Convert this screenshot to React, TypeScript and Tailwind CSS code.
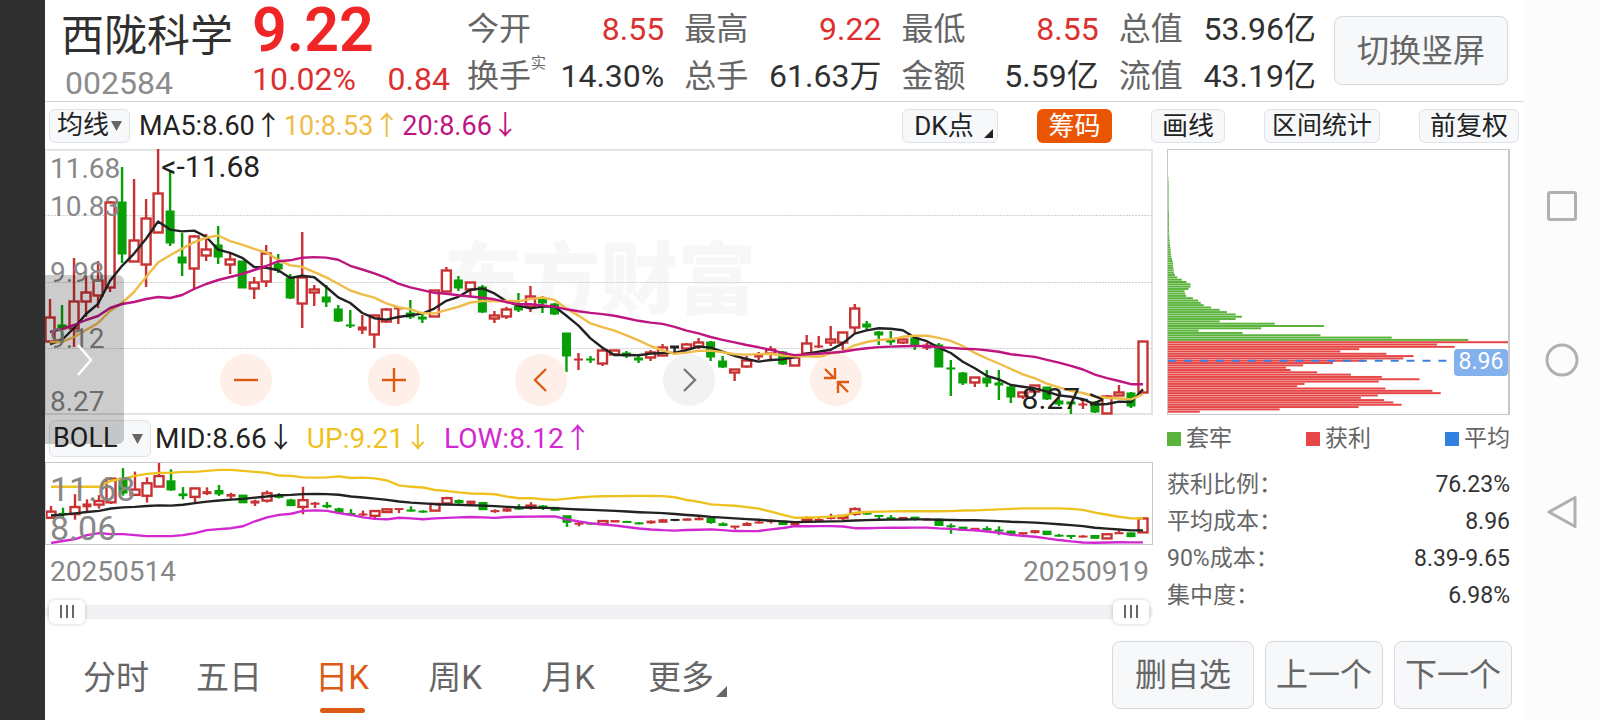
import React, { useState } from 'react';
import clsx from 'clsx';

type Tone = 'up' | 'down' | 'flat';

// high, body top, body bottom, low, direction
// Levels are measured down from the top of the price pane (0 = 11.68, 265 = 8.27)
type Candle = [number, number, number, number, Tone];

const r = (h: number, t: number, b: number, l: number): Candle => [h, t, b, l, 'up'];
const g = (h: number, t: number, b: number, l: number): Candle => [h, t, b, l, 'down'];

const CANDLES: Candle[] = [
  r(150, 168, 193, 193), g(156, 176, 180, 188), r(109, 152, 180, 198), r(127, 143, 153, 168),
  r(112, 131, 147, 159), r(52, 53, 139, 143), g(18, 53, 105, 114), r(30, 91, 113, 113),
  r(50, 69, 116, 138), r(0, 44, 84, 84), g(22, 62, 94, 97), g(84, 108, 114, 127),
  r(86, 87, 120, 140), r(85, 100, 107, 112), g(77, 96, 108, 115), r(104, 110, 116, 125),
  g(112, 112, 139, 139), r(128, 133, 140, 150), r(96, 104, 133, 138), g(105, 115, 120, 124),
  g(125, 129, 149, 150), r(83, 128, 155, 179), r(136, 140, 144, 157), g(136, 148, 153, 158),
  g(156, 160, 172, 173), g(161, 176, 177, 179), r(166, 178, 181, 185), r(166, 166, 186, 199),
  r(159, 160, 173, 174), r(159, 159, 160, 175), g(151, 164, 168, 170), g(165, 168, 170, 174),
  r(141, 141, 168, 168), r(118, 121, 143, 143), g(127, 131, 139, 142), r(133, 133, 141, 148),
  g(136, 138, 163, 164), r(162, 166, 170, 174), r(158, 160, 168, 170), g(144, 157, 161, 163),
  r(137, 147, 158, 163), g(147, 150, 154, 164), g(154, 155, 165, 166), g(184, 184, 207, 223),
  r(204, 210, 211, 221), g(207, 210, 211, 214), r(200, 201, 215, 217), r(201, 201, 206, 206),
  g(202, 204, 207, 209), g(206, 209, 211, 214), r(201, 203, 209, 212), r(195, 198, 207, 207),
  [197, 197, 199, 203, 'flat'], r(194, 195, 200, 201), r(189, 193, 198, 200), g(192, 193, 208, 212),
  g(207, 212, 218, 219), r(220, 220, 224, 232), r(207, 211, 218, 219), r(203, 206, 208, 211),
  r(197, 200, 205, 211), g(202, 203, 215, 216), r(208, 208, 217, 217), r(186, 194, 205, 205),
  r(187, 197, 198, 199), r(177, 190, 194, 197), r(183, 183, 194, 201), r(155, 159, 179, 184),
  g(172, 175, 178, 181), g(182, 183, 186, 196), g(182, 191, 193, 196), r(190, 190, 194, 195),
  g(188, 189, 196, 201), r(194, 196, 199, 201), g(194, 196, 218, 218), g(211, 219, 220, 247),
  g(223, 224, 234, 236), r(228, 228, 234, 238), g(221, 229, 234, 238), g(221, 234, 236, 251),
  g(236, 238, 248, 254), r(243, 243, 248, 250), r(236, 236, 243, 246), g(238, 238, 250, 251),
  g(248, 252, 255, 257), g(253, 253, 255, 265), r(252, 255, 256, 260), g(253, 253, 263, 264),
  r(246, 247, 265, 265), r(236, 243, 247, 247), g(243, 244, 257, 259), r(192, 192, 244, 244),
];

// Averages for the first sessions, which reach back before the visible range
const MA5_SEED = [195, 191, 179, 165];
const MA10_SEED = [193, 193, 188, 181, 174, 162, 154, 143, 128];
const MA20_SEED = [183, 180, 176, 171, 167, 159, 155, 153, 150, 148, 149, 146, 140, 135, 131, 128, 125, 121, 117];
const UP_SEED = [24, 24, 24, 24, 24, 18, 16, 13, 11, 10, 10, 9, 9, 8, 7, 7, 8, 9, 10];
const LOW_SEED = [81, 79, 77, 73, 71, 72, 72, 73, 74, 74, 74, 73, 71, 68, 67, 66, 64, 59, 55];

const TRAPPED = [
  1, 1, 2, 2, 2, 2, 2, 2, 2, 2, 2, 2, 2, 2, 2, 3, 3, 3, 3, 3, 3, 3, 3, 3, 3, 4, 4, 5, 5, 6, 7, 8, 8, 9, 10, 12, 14,
  15, 15, 16, 17, 18, 21, 28, 42, 56, 68, 68, 62, 50, 52, 55, 75, 91, 99, 108, 130, 156, 178, 204, 223, 204, 156, 322,
  471, 281, 92, 225, 460, 675, 906,
];
const PROFIT = [
  1026, 812, 865, 577, 520, 659, 741, 710, 592, 498, 408, 356, 370, 450, 552, 645, 759, 636, 412, 390, 656, 798, 823,
  633, 582, 652, 680, 705, 575, 337, 96,
];

const BOLL_SCALE = 0.29;
const closes = CANDLES.map(([, top, bottom, , tone]) => (tone === 'up' ? top : bottom));

const xOf = (i: number) => 5 + i * 12;
const mean = (xs: number[]) => xs.reduce((a, b) => a + b, 0) / xs.length;

const movingAverage = (n: number, seed: number[]) =>
  closes.map((_, i) => (i < n - 1 ? seed[i] : mean(closes.slice(i - n + 1, i + 1))));

const bollBand = (side: number, seed: number[]) =>
  closes.map((_, i) => {
    if (i < 19) return seed[i];
    const win = closes.slice(i - 19, i + 1);
    const m = mean(win);
    const sd = Math.sqrt(mean(win.map((c) => (c - m) ** 2)));
    return (m + side * 2 * sd) * BOLL_SCALE;
  });

const toPoints = (ys: number[]) => ys.map((y, i) => `${xOf(i)},${y.toFixed(1)}`).join(' ');

const MA5 = movingAverage(5, MA5_SEED);
const MA10 = movingAverage(10, MA10_SEED);
const MA20 = movingAverage(20, MA20_SEED);

const TONE_COLOR: Record<Tone, string> = { up: '#c83232', down: '#07a007', flat: '#222222' };

const Candles: React.FC<{ scale?: number }> = ({ scale = 1 }) => (
  <g>
    {CANDLES.map(([high, top, bottom, low, tone], i) => {
      const x = xOf(i);
      const color = TONE_COLOR[tone];
      const [h, t, b, l] = [high, top, bottom, low].map((v) => v * scale);
      const hollow = tone === 'up' && b - t > 3;
      return (
        <g key={i} stroke={color} strokeWidth={2.4}>
          {t > h && <line x1={x} x2={x} y1={h} y2={t} />}
          {l > b && <line x1={x} x2={x} y1={b} y2={l} />}
          {hollow ? (
            <rect x={x - 4.5} y={t + 0.5} width={9} height={b - t - 1} fill="#ffffff" />
          ) : (
            <rect x={x - 4.5} y={t - 0.5} width={9} height={Math.max(b - t + 1, 2)} fill={color} stroke="none" />
          )}
        </g>
      );
    })}
  </g>
);

const Line: React.FC<{ ys: number[]; color: string }> = ({ ys, color }) => (
  <polyline points={toPoints(ys)} fill="none" stroke={color} strokeWidth={2.4} strokeLinejoin="round" />
);

const Arrow: React.FC<{ children: string }> = ({ children }) => (
  <span className="[font-family:'Noto_Sans_CJK_SC',sans-serif]">{children}</span>
);

const STATS = [
  { label: '今开', value: '8.55', red: true },
  { label: '最高', value: '9.22', red: true },
  { label: '最低', value: '8.55', red: true },
  { label: '总值', value: '53.96亿' },
  { label: '换手', sup: '实', value: '14.30%' },
  { label: '总手', value: '61.63万' },
  { label: '金额', value: '5.59亿' },
  { label: '流值', value: '43.19亿' },
];

const Header: React.FC = () => (
  <header className="flex h-[102px] border-b border-[#d4d4d4] pr-[15px]">
    <div className="w-[207px] shrink-0 pl-4">
      <h1 className="mt-2 text-[43px] leading-[56px] text-[#303030]">西陇科学</h1>
      <p className="pl-1 text-[32px] leading-[38px] text-[#8c8c8c]">002584</p>
    </div>
    <div className="w-[215px] shrink-0">
      <p className="text-[61px] leading-[60px] font-semibold text-[#f02626]">9.22</p>
      <p className="flex justify-between pr-[17px] text-[32px] leading-[38px] text-[#dc3030]">
        <span>10.02%</span>
        <span>0.84</span>
      </p>
    </div>
    <dl className="grid flex-1 grid-cols-4 content-start gap-x-5 pt-[6px] text-[32px] leading-[47px]">
      {STATS.map(({ label, sup, value, red }) => (
        <div key={label} className="flex justify-between whitespace-nowrap">
          <dt className="flex text-[#666666]">
            {label}
            {sup && <span className="text-[15px] leading-5">{sup}</span>}
          </dt>
          <dd className={red ? 'text-[#dc3030]' : 'text-[#303030]'}>{value}</dd>
        </div>
      ))}
    </dl>
    <button
      type="button"
      className="mt-4 ml-[18px] h-[69px] w-[174px] shrink-0 rounded-lg border border-[#d5d8dc] bg-[#f7f8fa] text-[32px] text-[#666666]"
    >
      切换竖屏
    </button>
  </header>
);

const Picker: React.FC<{ label: string; value: string; className: string }> = ({ label, value, className }) => (
  <label
    className={clsx('flex items-center rounded-md border border-[#dfe2e6] bg-[#f7f8fa] text-[#222222]', className)}
  >
    <select aria-label={label} defaultValue={value} className="min-w-0 flex-1 appearance-none bg-transparent">
      <option>{value}</option>
    </select>
    <svg width="11" height="10" viewBox="0 0 11 10" className="shrink-0">
      <path d="M0 0h11L5.500 10z" fill="#666666" />
    </svg>
  </label>
);

const chip = 'flex h-[34px] items-center justify-center rounded-md text-[26px] leading-none';
const plainChip = 'border border-[#dfe2e6] bg-[#f7f8fa] text-[#222222]';

const Toolbar: React.FC = () => {
  const [chipsOn, setChipsOn] = useState(true);
  return (
    <div className="flex h-[47px] items-center pr-1 pl-1">
      <Picker label="主图指标" value="均线" className="h-[34px] w-[81px] pr-[7px] pl-[7px] text-[26px]" />
      <p className="flex gap-0.5 pl-[9px] text-[27px] whitespace-nowrap">
        <span className="text-[#222222]">MA5:8.60<Arrow>↑</Arrow></span>
        <span className="text-[#f0bc48]">10:8.53<Arrow>↑</Arrow></span>
        <span className="text-[#bf1581]">20:8.66<Arrow>↓</Arrow></span>
      </p>
      <div className="ml-auto flex gap-[39px]">
        <button type="button" className={clsx(chip, plainChip, 'relative w-[96px] pr-3')}>
          DK点
          <svg width="9" height="9" viewBox="0 0 9 9" className="absolute right-1 bottom-1">
            <path d="M9 0v9H0z" fill="#222222" />
          </svg>
        </button>
        <button
          type="button"
          aria-pressed={chipsOn}
          onClick={() => setChipsOn(!chipsOn)}
          className={clsx(chip, 'w-[75px]', chipsOn ? 'bg-[#ea5504] text-white' : plainChip)}
        >
          筹码
        </button>
        <button type="button" className={clsx(chip, plainChip, 'w-[74px]')}>画线</button>
        <button type="button" className={clsx(chip, plainChip, 'w-[116px]')}>
          <span className="text-[25px]">区间统计</span>
        </button>
        <button type="button" className={clsx(chip, plainChip, 'w-[100px]')}>前复权</button>
      </div>
    </div>
  );
};

const CONTROLS = [
  { name: '缩小', d: 'M14 26h24' },
  { name: '放大', d: 'M14 26h24M26 14v24' },
  { name: '向左', d: 'M31 15L20 26l11 11' },
  { name: '向右', d: 'M21 15l11 11-11 11', muted: true },
  { name: '收起', d: 'M15 15l9 9M25 14v10H14M38 38l-9-9M28 39V28h11' },
];

const axisText = 'absolute left-[5px] text-[28px] leading-8 text-[#888888]';

const PricePane: React.FC = () => (
  <div className="relative h-[266px]">
    <div className="absolute inset-0 border-2 border-l border-[#e3e3e3]" />
    <p className="absolute top-[89px] left-[36%] text-[78px] leading-[88px] font-black whitespace-nowrap text-[#f7f7f7]">
      东方财富
    </p>
    <svg
      viewBox="0 0 1107 266"
      preserveAspectRatio="none"
      className="absolute inset-0 h-full w-full"
      role="img"
      aria-label="日K线图"
    >
      {[66, 133, 199].map((y) => (
        <line key={y} x1={0} x2={1106} y1={y + 0.5} y2={y + 0.5} stroke="#d0d0d0" strokeDasharray="2 1" />
      ))}
      <Candles />
      <Line ys={MA5} color="#222222" />
      <Line ys={MA10} color="#f0bc48" />
      <Line ys={MA20} color="#bf1581" />
    </svg>
    <span className={clsx(axisText, 'top-[4px]')}>11.68</span>
    <span className={clsx(axisText, 'top-[42px]')}>10.83</span>
    <span className={clsx(axisText, 'top-[108px]')}>9.98</span>
    <span className={clsx(axisText, 'top-[174px]')}>9.12</span>
    <span className={clsx(axisText, 'top-[237px]')}>8.27</span>
    <span className="absolute top-[2px] left-[10.500%] text-[30px] leading-8 text-[#222222]">&lt;-11.68</span>
    <span className="absolute top-[234px] right-[49px] text-[30px] leading-8 text-[#222222]">8.27-&gt;</span>
    <div className="absolute top-[205px] left-[175px] flex w-[642px] justify-between">
      {CONTROLS.map(({ name, d, muted }) => (
        <button
          key={name}
          type="button"
          aria-label={name}
          className={clsx('size-[52px] rounded-full', muted ? 'bg-[#f2f2f2]' : 'bg-[#fef0e9]')}
        >
          <svg viewBox="0 0 52 52" fill="none" stroke={muted ? '#777777' : '#dd5a14'} strokeWidth={2.4}>
            <path d={d} />
          </svg>
        </button>
      ))}
    </div>
    <button
      type="button"
      aria-label="展开"
      className="absolute top-[126px] left-0 z-10 h-[169px] w-[79px] rounded-r-md bg-black/20"
    >
      <svg viewBox="0 0 79 169" fill="none" stroke="#ffffff" strokeWidth={2.4}>
        <path d="M33 70l13 15-13 15" />
      </svg>
    </button>
  </div>
);

const BollPane: React.FC = () => (
  <>
    <div className="flex h-[47px] items-center pl-1">
      <Picker label="副图指标" value="BOLL" className="h-[37px] w-[102px] pr-[7px] pl-[3px] text-[27px]" />
      <p className="flex gap-3 pb-0.5 pl-1 text-[28px] whitespace-nowrap">
        <span className="text-[#222222]">MID:8.66<Arrow>↓</Arrow></span>
        <span className="text-[#eec21e]">UP:9.21<Arrow>↓</Arrow></span>
        <span className="text-[#d228d2]">LOW:8.12<Arrow>↑</Arrow></span>
      </p>
    </div>
    <div className="relative h-[83px] border border-[#c8c8c8]">
      <svg
        viewBox="0 0 1106 82"
        preserveAspectRatio="none"
        className="absolute inset-0 h-full w-full"
        role="img"
        aria-label="BOLL指标图"
      >
        <Candles scale={BOLL_SCALE} />
        <Line ys={bollBand(-1, UP_SEED)} color="#eec21e" />
        <Line ys={MA20.map((y) => y * BOLL_SCALE)} color="#222222" />
        <Line ys={bollBand(1, LOW_SEED)} color="#d228d2" />
      </svg>
      <span className="absolute top-[8px] left-1 text-[34px] leading-9 text-[#888888]">11.68</span>
      <span className="absolute top-[47px] left-1 text-[34px] leading-9 text-[#888888]">8.06</span>
    </div>
  </>
);

const thumb = clsx(
  'pointer-events-none absolute inset-x-1 top-0 h-6 appearance-none bg-transparent',
  '[&::-webkit-slider-thumb]:pointer-events-auto [&::-webkit-slider-thumb]:appearance-none',
  '[&::-webkit-slider-thumb]:h-6 [&::-webkit-slider-thumb]:w-9 [&::-webkit-slider-thumb]:rounded-md',
  '[&::-webkit-slider-thumb]:shadow-[0_0_4px_rgba(0,0,0,0.2)]',
  '[&::-webkit-slider-thumb]:[background:linear-gradient(#666,#666)_11px_5px/2px_13px_no-repeat,linear-gradient(#666,#666)_17px_5px/2px_13px_no-repeat,linear-gradient(#666,#666)_23px_5px/2px_13px_no-repeat,#fff]',
);

const RangeBar: React.FC = () => {
  const [from, setFrom] = useState(0);
  const [to, setTo] = useState(100);
  return (
    <div className="relative h-6">
      <div className="absolute inset-x-0 top-[5px] h-[14px] rounded-full bg-[#f1f1f3]" />
      <input
        type="range"
        aria-label="开始日期"
        value={from}
        onChange={(e) => setFrom(Math.min(Number(e.target.value), to))}
        className={thumb}
      />
      <input
        type="range"
        aria-label="结束日期"
        value={to}
        onChange={(e) => setTo(Math.max(Number(e.target.value), from))}
        className={thumb}
      />
    </div>
  );
};

const LEGEND = [
  { name: '套牢', color: 'bg-[#5ab43c]' },
  { name: '获利', color: 'bg-[#e64646]' },
  { name: '平均', color: 'bg-[#2f80e0]' },
];

const COSTS = [
  ['获利比例：', '76.23%'],
  ['平均成本：', '8.96'],
  ['90%成本：', '8.39-9.65'],
  ['集中度：', '6.98%'],
];

const ChipPanel: React.FC = () => {
  const bars = [...TRAPPED, ...PROFIT];
  return (
    <aside className="w-[343px] shrink-0">
      <div className="relative h-[266px] border border-r-2 border-[#c8c8c8]">
        <svg
          viewBox="0 0 1026 798"
          preserveAspectRatio="none"
          className="absolute inset-0 h-full w-full"
          role="img"
          aria-label="筹码分布"
        >
          {bars.map((w, i) => (
            <rect
              key={i}
              x={0}
              y={788 - (bars.length - 1 - i) * 7}
              width={w}
              height={6}
              fill={i < TRAPPED.length ? '#5ab43c' : '#e64646'}
            />
          ))}
          <line x1={0} x2={870} y1={637} y2={637} stroke="#3d7fe0" strokeWidth={6} strokeDasharray="24 24" />
        </svg>
        <span className="absolute top-[199px] right-0 flex h-[27px] w-[54px] items-center justify-center rounded bg-[#83b1ee] text-[23px] text-white">
          8.96
        </span>
      </div>
      <ul className="mt-[6px] flex h-9 items-center justify-between text-[23px] text-[#666666]">
        {LEGEND.map(({ name, color }) => (
          <li key={name} className="flex items-center gap-[5px]">
            <span className={clsx('size-[14px]', color)} />
            {name}
          </li>
        ))}
      </ul>
      <dl className="mt-[9px] text-[23px] leading-[37px]">
        {COSTS.map(([label, value]) => (
          <div key={label} className="flex justify-between">
            <dt className="text-[#666666]">{label}</dt>
            <dd className="text-[#333333]">{value}</dd>
          </div>
        ))}
      </dl>
    </aside>
  );
};

const TABS = ['分时', '五日', '日K', '周K', '月K'];

const footerButton = 'h-[68px] rounded-lg border border-[#d5d8dc] bg-[#f7f8fa] text-[32px] text-[#666666]';

const Footer: React.FC = () => {
  const [active, setActive] = useState('日K');
  return (
    <footer className="mt-[17px] flex items-start justify-between pr-[11px] pl-[38px]">
      <nav className="flex gap-[47px] pt-[6px] text-[33px] text-[#666666]">
        {TABS.map((tab) => (
          <button
            key={tab}
            type="button"
            aria-current={tab === active ? 'page' : undefined}
            onClick={() => setActive(tab)}
            className={clsx('flex min-w-[66px] flex-col items-center', tab === active && 'text-[#dd5a14]')}
          >
            <span className="leading-[61px]">{tab}</span>
            {tab === active && <span className="h-[5px] w-[45px] rounded-full bg-[#dd5a14]" />}
          </button>
        ))}
        <button type="button" className="flex gap-[2px]">
          <span className="leading-[61px]">更多</span>
          <svg width="11" height="11" viewBox="0 0 11 11" className="mt-[39px]">
            <path d="M11 0v11H0z" fill="#666666" />
          </svg>
        </button>
      </nav>
      <div className="flex gap-[11px]">
        <button type="button" className={clsx(footerButton, 'w-[142px]')}>删自选</button>
        <button type="button" className={clsx(footerButton, 'w-[118px]')}>上一个</button>
        <button type="button" className={clsx(footerButton, 'w-[118px]')}>下一个</button>
      </div>
    </footer>
  );
};

const SystemNav: React.FC = () => (
  <nav className="flex w-[77px] shrink-0 flex-col items-center gap-[113px] bg-[#fcfcfc] pt-[186px]">
    <button type="button" aria-label="最近任务">
      <svg width="40" height="40" fill="none" stroke="#b0b0b0" strokeWidth={3}>
        <rect x="6.500" y="6.500" width="27" height="27" rx="1.500" />
      </svg>
    </button>
    <button type="button" aria-label="主屏幕">
      <svg width="40" height="40" fill="none" stroke="#b0b0b0" strokeWidth={3}>
        <circle cx="20" cy="21" r="15" />
      </svg>
    </button>
    <button type="button" aria-label="返回">
      <svg width="40" height="40" fill="none" stroke="#b0b0b0" strokeWidth={3} strokeLinejoin="round">
        <path d="M7 20L33 5.500v29z" />
      </svg>
    </button>
  </nav>
);

const App: React.FC = () => (
  <div className="flex min-h-screen bg-white [font-family:Roboto,'Noto_Sans_CJK_SC',sans-serif]">
    <div className="w-[45px] shrink-0 bg-[#303030]" />
    <main className="min-w-0 flex-1">
      <Header />
      <Toolbar />
      <div className="flex gap-[14px] pr-[13px]">
        <section className="min-w-0 flex-1">
          <PricePane />
          <BollPane />
          <div className="flex h-[55px] items-center justify-between pr-1 pb-0.5 pl-[5px] text-[28px] text-[#888888]">
            <time>20250514</time>
            <time>20250919</time>
          </div>
          <RangeBar />
        </section>
        <ChipPanel />
      </div>
      <Footer />
    </main>
    <SystemNav />
  </div>
);

export default App;
